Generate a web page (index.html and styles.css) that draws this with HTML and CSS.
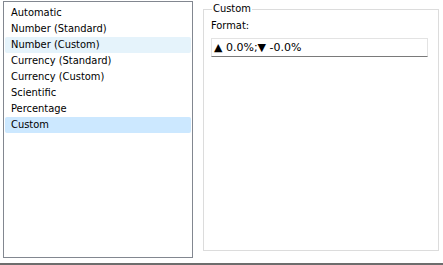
FILE: index.html
```html
<!DOCTYPE html>
<html>
<head>
<meta charset="utf-8">
<link rel="stylesheet" href="styles.css">
</head>
<body>
<div class="main">
  <div class="list">
    <div class="item">Automatic</div>
    <div class="item">Number (Standard)</div>
    <div class="item hover">Number (Custom)</div>
    <div class="item">Currency (Standard)</div>
    <div class="item">Currency (Custom)</div>
    <div class="item">Scientific</div>
    <div class="item">Percentage</div>
    <div class="item selected">Custom</div>
  </div>
  <fieldset class="group">
    <legend class="legend">Custom</legend>
    <div class="label">Format:</div>
    <div class="input">▲ 0.0%;▼ -0.0%</div>
  </fieldset>
</div>
<div class="footer"></div>
</body>
</html>
```
FILE: styles.css
```css
html, body {
  margin: 0;
  padding: 0;
  background: #ffffff;
}
body {
  width: 443px;
  height: 265px;
  font-family: "DejaVu Sans Condensed", "DejaVu Sans", Tahoma, sans-serif;
  font-size: 11px;
  color: #000;
  overflow: hidden;
}
.main {
  display: flex;
  height: 263px;
  padding: 1px 0 0 3px;
  box-sizing: border-box;
}
.list {
  width: 190px;
  height: 257px;
  box-sizing: border-box;
  border: 1px solid #828790;
  padding: 3px 1px 0 1px;
}
.item {
  height: 16px;
  line-height: 16px;
  padding-left: 6px;
  border-radius: 2px;
}
.item.hover { background: #e5f3fb; }
.item.selected { background: #cce8ff; }
.group {
  margin: 1px 0 0 10px;
  width: 236px;
  height: 249px;
  box-sizing: border-box;
  border: 1px solid #dcdcdc;
  padding: 0 10px 0 7px;
}
.legend {
  padding: 0 1px;
  margin-left: 1px;
  line-height: 14px;
}
.label {
  margin-top: 3px;
  line-height: 14px;
}
.input {
  margin-top: 5px;
  height: 19px;
  box-sizing: border-box;
  border: 1px solid #e3e3e3;
  border-bottom: 1px solid #7a7a7a;
  padding-left: 2px;
  line-height: 17px;
  font-family: "DejaVu Sans", Tahoma, sans-serif;
}
.footer {
  height: 2px;
  background: #6d6d6d;
}
```
